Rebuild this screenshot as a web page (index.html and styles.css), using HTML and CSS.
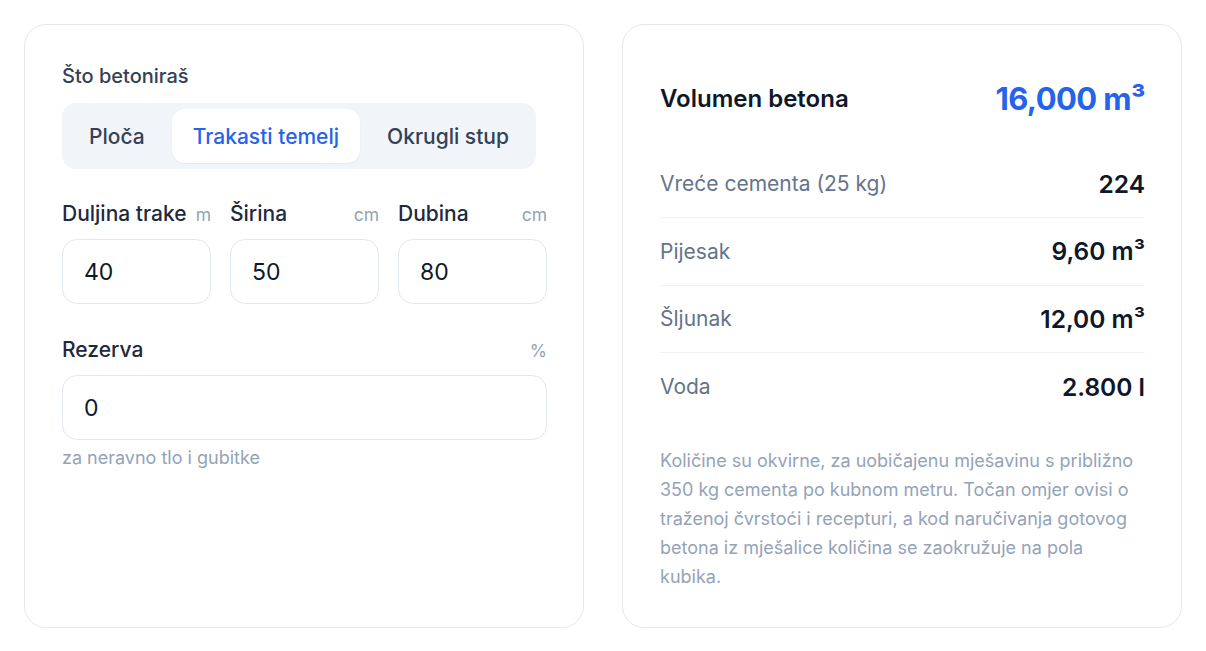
FILE: index.html
```html
<!DOCTYPE html>
<html lang="hr">
<head>
  <meta charset="utf-8">
  <title>Kalkulator betona</title>
  <meta name="viewport" content="width=device-width, initial-scale=1">
  <link rel="stylesheet" href="styles.css">
</head>
<body>
  <div class="calc">
    <div class="card form-card">
      <div class="field-title">Što betoniraš</div>
      <div class="tabs">
        <button class="tab">Ploča</button>
        <button class="tab active">Trakasti temelj</button>
        <button class="tab">Okrugli stup</button>
      </div>

      <div class="dims">
        <div class="field">
          <div class="label-row"><span class="label">Duljina trake</span><span class="unit">m</span></div>
          <input class="input" type="text" value="40">
        </div>
        <div class="field">
          <div class="label-row"><span class="label">Širina</span><span class="unit">cm</span></div>
          <input class="input" type="text" value="50">
        </div>
        <div class="field">
          <div class="label-row"><span class="label">Dubina</span><span class="unit">cm</span></div>
          <input class="input" type="text" value="80">
        </div>
      </div>

      <div class="field reserve">
        <div class="label-row"><span class="label">Rezerva</span><span class="unit">%</span></div>
        <input class="input" type="text" value="0">
        <div class="hint">za neravno tlo i gubitke</div>
      </div>
    </div>

    <div class="card result-card">
      <div class="total">
        <span class="total-label">Volumen betona</span>
        <span class="total-value">16,000 m³</span>
      </div>
      <div class="rows">
        <div class="row"><span class="row-label">Vreće cementa (25 kg)</span><span class="row-value">224</span></div>
        <div class="row"><span class="row-label">Pijesak</span><span class="row-value">9,60 m³</span></div>
        <div class="row"><span class="row-label">Šljunak</span><span class="row-value">12,00 m³</span></div>
        <div class="row"><span class="row-label">Voda</span><span class="row-value">2.800 l</span></div>
      </div>
      <p class="note">Količine su okvirne, za uobičajenu mješavinu s približno 350 kg cementa po kubnom metru. Točan omjer ovisi o traženoj čvrstoći i recepturi, a kod naručivanja gotovog betona iz mješalice količina se zaokružuje na pola kubika.</p>
    </div>
  </div>
</body>
</html>
```

FILE: styles.css
```css
/* osnovno */
html, body {
  margin: 0;
  padding: 0;
  background: #ffffff;
  font-family: Inter, "Noto Sans", sans-serif;
  color: #1e293b;
}

.calc {
  display: grid;
  grid-template-columns: 560px 560px;
  gap: 38px;
  padding: 24px;
}

.card {
  border: 1px solid #e5e7eb;
  border-radius: 22px;
  padding: 36px 36px 36px 37px;
  background: #fff;
}

/* lijeva kartica */
.field-title {
  font-size: 20px;
  font-weight: 500;
  line-height: 24px;
  color: #334155;
  margin-top: 3px;
  margin-bottom: 15px;
}

.tabs {
  display: inline-flex;
  gap: 6px;
  padding: 6px;
  background: #f1f5f9;
  border-radius: 14px;
}

.tab {
  height: 54px;
  padding: 0 21px;
  border: none;
  background: transparent;
  border-radius: 13px;
  font-family: inherit;
  font-size: 21px;
  font-weight: 500;
  color: #334155;
  cursor: pointer;
}

.tab.active {
  background: #fff;
  color: #2563eb;
  box-shadow: 0 1px 2px rgba(15, 23, 42, 0.05);
}

.dims {
  display: grid;
  grid-template-columns: repeat(3, 1fr);
  gap: 19px;
  margin-top: 33px;
}

.label-row {
  display: flex;
  justify-content: space-between;
  align-items: baseline;
  line-height: 24px;
  margin-bottom: 12px;
}

.label {
  font-size: 21px;
  font-weight: 500;
  color: #1e293b;
}

.unit {
  font-size: 17.5px;
  color: #94a3b8;
}

.input {
  display: block;
  width: 100%;
  box-sizing: border-box;
  height: 65px;
  padding: 0 21px;
  border: 1px solid #e2e8f0;
  border-radius: 15px;
  font-family: inherit;
  font-size: 23px;
  color: #0f172a;
  background: #fff;
  outline: none;
}

.reserve {
  margin-top: 34px;
}

.hint {
  margin-top: 7px;
  font-size: 18px;
  line-height: 22px;
  color: #94a3b8;
}

/* desna kartica */
.total {
  display: flex;
  justify-content: space-between;
  align-items: center;
  height: 74px;
  margin-bottom: 15.5px;
}

.total-label {
  font-size: 24px;
  font-weight: 600;
  color: #0f172a;
}

.total-value {
  font-size: 31px;
  font-weight: 700;
  color: #2563eb;
  letter-spacing: -0.6px;
}

.row {
  display: flex;
  justify-content: space-between;
  align-items: center;
  box-sizing: border-box;
  height: 67.5px;
  border-bottom: 1px solid #eef1f5;
}

.row:last-child {
  border-bottom: none;
}

.row-label {
  font-size: 21px;
  color: #64748b;
}

.row-value {
  font-size: 24.5px;
  font-weight: 600;
  color: #0f172a;
}

.note {
  margin: 25px 0 0;
  font-size: 18px;
  line-height: 29px;
  color: #94a3b8;
}
```
